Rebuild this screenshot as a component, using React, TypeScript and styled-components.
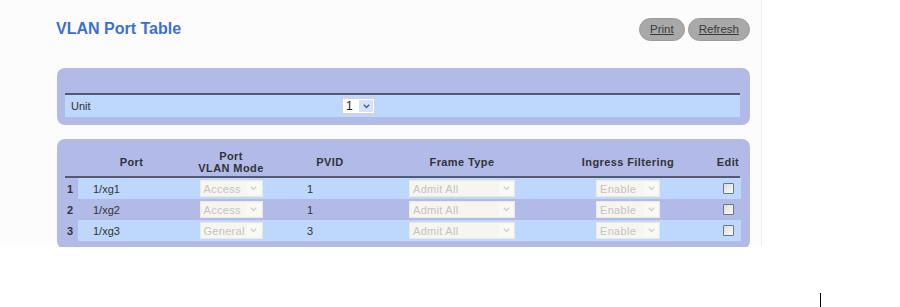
import * as React from "react";
import styled, { createGlobalStyle } from "styled-components";

const GlobalStyle = createGlobalStyle`
  html, body {
    margin: 0;
    padding: 0;
    background: #ffffff;
  }
  body {
    font-family: "Liberation Sans", Arial, sans-serif;
  }
`;

const COLS = "13px 107px 92px 106px 158px 174px 26px";

const S = {
  Page: styled.div`
    width: 900px;
    height: 307px;
    overflow: hidden;
  `,
  Frame: styled.div`
    width: 762px;
    height: 247px;
    box-sizing: border-box;
    overflow: hidden;
    background: #fcfcfd;
    border-right: 1px solid #efefef;
    padding: 17px 11px 0 57px;
  `,
  TopBar: styled.div`
    display: flex;
    align-items: center;
    justify-content: space-between;
    height: 24px;
  `,
  Title: styled.h1`
    margin: 0 0 0 -1px;
    font-size: 16px;
    font-weight: bold;
    color: #3a70d2;
  `,
  Buttons: styled.div`
    display: flex;
    gap: 3px;
  `,
  Button: styled.button`
    height: 23px;
    padding: 0 10px;
    border: 1px solid #9c9c9c;
    border-radius: 12px;
    background: #a9a9a9;
    color: #3a3a3a;
    font-family: "Liberation Sans", Arial, sans-serif;
    font-size: 11.5px;
    text-decoration: underline;
    cursor: pointer;
  `,
  Panel: styled.div<{ $top: number }>`
    margin-top: ${(p) => p.$top}px;
    background: #b2bae8;
    border-radius: 8px;
    padding: 0 10px 8px 8px;
  `,
  UnitHead: styled.div`
    height: 25px;
    border-bottom: 2px solid #555a70;
  `,
  UnitRow: styled.div`
    display: grid;
    grid-template-columns: 277px 1fr;
    align-items: center;
    height: 22px;
    background: #bdd8fc;
    font-size: 11px;
    color: #333;
  `,
  UnitLabel: styled.span`
    padding-left: 6px;
  `,
  UnitSelect: styled.div`
    display: flex;
    align-items: center;
    justify-content: space-between;
    width: 33px;
    height: 16px;
    box-sizing: border-box;
    background: #fff;
    border: 1px solid #d4d4d4;
    padding: 0 1px 0 3px;
    font-size: 12px;
    color: #222;
  `,
  UnitArrow: styled.span`
    display: flex;
    align-items: center;
    justify-content: center;
    width: 14px;
    height: 12px;
    background: #d9e1f8;
  `,
  HeadRow: styled.div`
    display: grid;
    grid-template-columns: ${COLS};
    align-items: center;
    height: 29px;
    padding-top: 8px;
    border-bottom: 2px solid #555a70;
  `,
  HeadCell: styled.div`
    text-align: center;
    font-size: 11px;
    font-weight: bold;
    letter-spacing: 0.4px;
    line-height: 12px;
    color: #333;
  `,
  Row: styled.div`
    display: grid;
    grid-template-columns: ${COLS};
    height: 21px;
  `,
  Index: styled.div`
    display: flex;
    align-items: center;
    padding-left: 2px;
    font-size: 11px;
    font-weight: bold;
    color: #333;
  `,
  Cell: styled.div<{ $light: boolean; $pad?: number; $center?: boolean }>`
    display: flex;
    align-items: center;
    justify-content: ${(p) => (p.$center ? "center" : "flex-start")};
    padding-left: ${(p) => p.$pad ?? 0}px;
    background: ${(p) => (p.$light ? "#bdd8fc" : "transparent")};
    font-size: 11px;
    color: #333;
  `,
  Select: styled.div<{ $width: number }>`
    display: flex;
    align-items: center;
    justify-content: space-between;
    width: ${(p) => p.$width}px;
    height: 17px;
    box-sizing: border-box;
    background: #f6f5ef;
    border: 1px solid #ebeae2;
    padding: 0 1px 0 3px;
    font-size: 11px;
    letter-spacing: 0.3px;
    color: #c4c4c0;
  `,
  Arrow: styled.span`
    display: flex;
    align-items: center;
    justify-content: center;
    width: 14px;
    height: 13px;
    background: #f9f9f6;
  `,
  Check: styled.span`
    width: 11px;
    height: 11px;
    box-sizing: border-box;
    border: 1px solid #66788e;
    border-radius: 1px;
    background: linear-gradient(135deg, #dcdcd6, #fafaf8);
  `,
  Footer: styled.div`
    padding: 46px 0 0 820px;
  `,
  Caret: styled.div`
    width: 1px;
    height: 14px;
    background: #000;
  `,
};

const Chevron = ({ color }: { color: string }) => (
  <svg width="7" height="5" viewBox="0 0 7 5">
    <path d="M0.8 0.8 L3.5 3.6 L6.2 0.8" fill="none" stroke={color} strokeWidth="1.4" />
  </svg>
);

const DisabledSelect = ({ value, width }: { value: string; width: number }) => (
  <S.Select $width={width}>
    <span>{value}</span>
    <S.Arrow>
      <Chevron color="#cfcfcc" />
    </S.Arrow>
  </S.Select>
);

const rows = [
  { id: 1, port: "1/xg1", mode: "Access", pvid: "1" },
  { id: 2, port: "1/xg2", mode: "Access", pvid: "1" },
  { id: 3, port: "1/xg3", mode: "General", pvid: "3" },
];

export default function App() {
  return (
    <S.Page>
      <GlobalStyle />
      <S.Frame>
        <S.TopBar>
          <S.Title>VLAN Port Table</S.Title>
          <S.Buttons>
            <S.Button>Print</S.Button>
            <S.Button>Refresh</S.Button>
          </S.Buttons>
        </S.TopBar>

        <S.Panel $top={27}>
          <S.UnitHead />
          <S.UnitRow>
            <S.UnitLabel>Unit</S.UnitLabel>
            <S.UnitSelect>
              <span>1</span>
              <S.UnitArrow>
                <Chevron color="#3d5ca6" />
              </S.UnitArrow>
            </S.UnitSelect>
          </S.UnitRow>
        </S.Panel>

        <S.Panel $top={14}>
          <S.HeadRow>
            <S.HeadCell />
            <S.HeadCell>Port</S.HeadCell>
            <S.HeadCell>
              Port
              <br />
              VLAN Mode
            </S.HeadCell>
            <S.HeadCell>PVID</S.HeadCell>
            <S.HeadCell>Frame Type</S.HeadCell>
            <S.HeadCell>Ingress Filtering</S.HeadCell>
            <S.HeadCell>Edit</S.HeadCell>
          </S.HeadRow>
          {rows.map((r) => {
            const light = r.id % 2 === 1;
            return (
              <S.Row key={r.id}>
                <S.Index>{r.id}</S.Index>
                <S.Cell $light={light} $pad={15}>
                  {r.port}
                </S.Cell>
                <S.Cell $light={light} $center>
                  <DisabledSelect value={r.mode} width={63} />
                </S.Cell>
                <S.Cell $light={light} $pad={30}>
                  {r.pvid}
                </S.Cell>
                <S.Cell $light={light} $center>
                  <DisabledSelect value="Admit All" width={106} />
                </S.Cell>
                <S.Cell $light={light} $center>
                  <DisabledSelect value="Enable" width={64} />
                </S.Cell>
                <S.Cell $light={light} $center>
                  <S.Check />
                </S.Cell>
              </S.Row>
            );
          })}
        </S.Panel>
      </S.Frame>
      <S.Footer>
        <S.Caret />
      </S.Footer>
    </S.Page>
  );
}
